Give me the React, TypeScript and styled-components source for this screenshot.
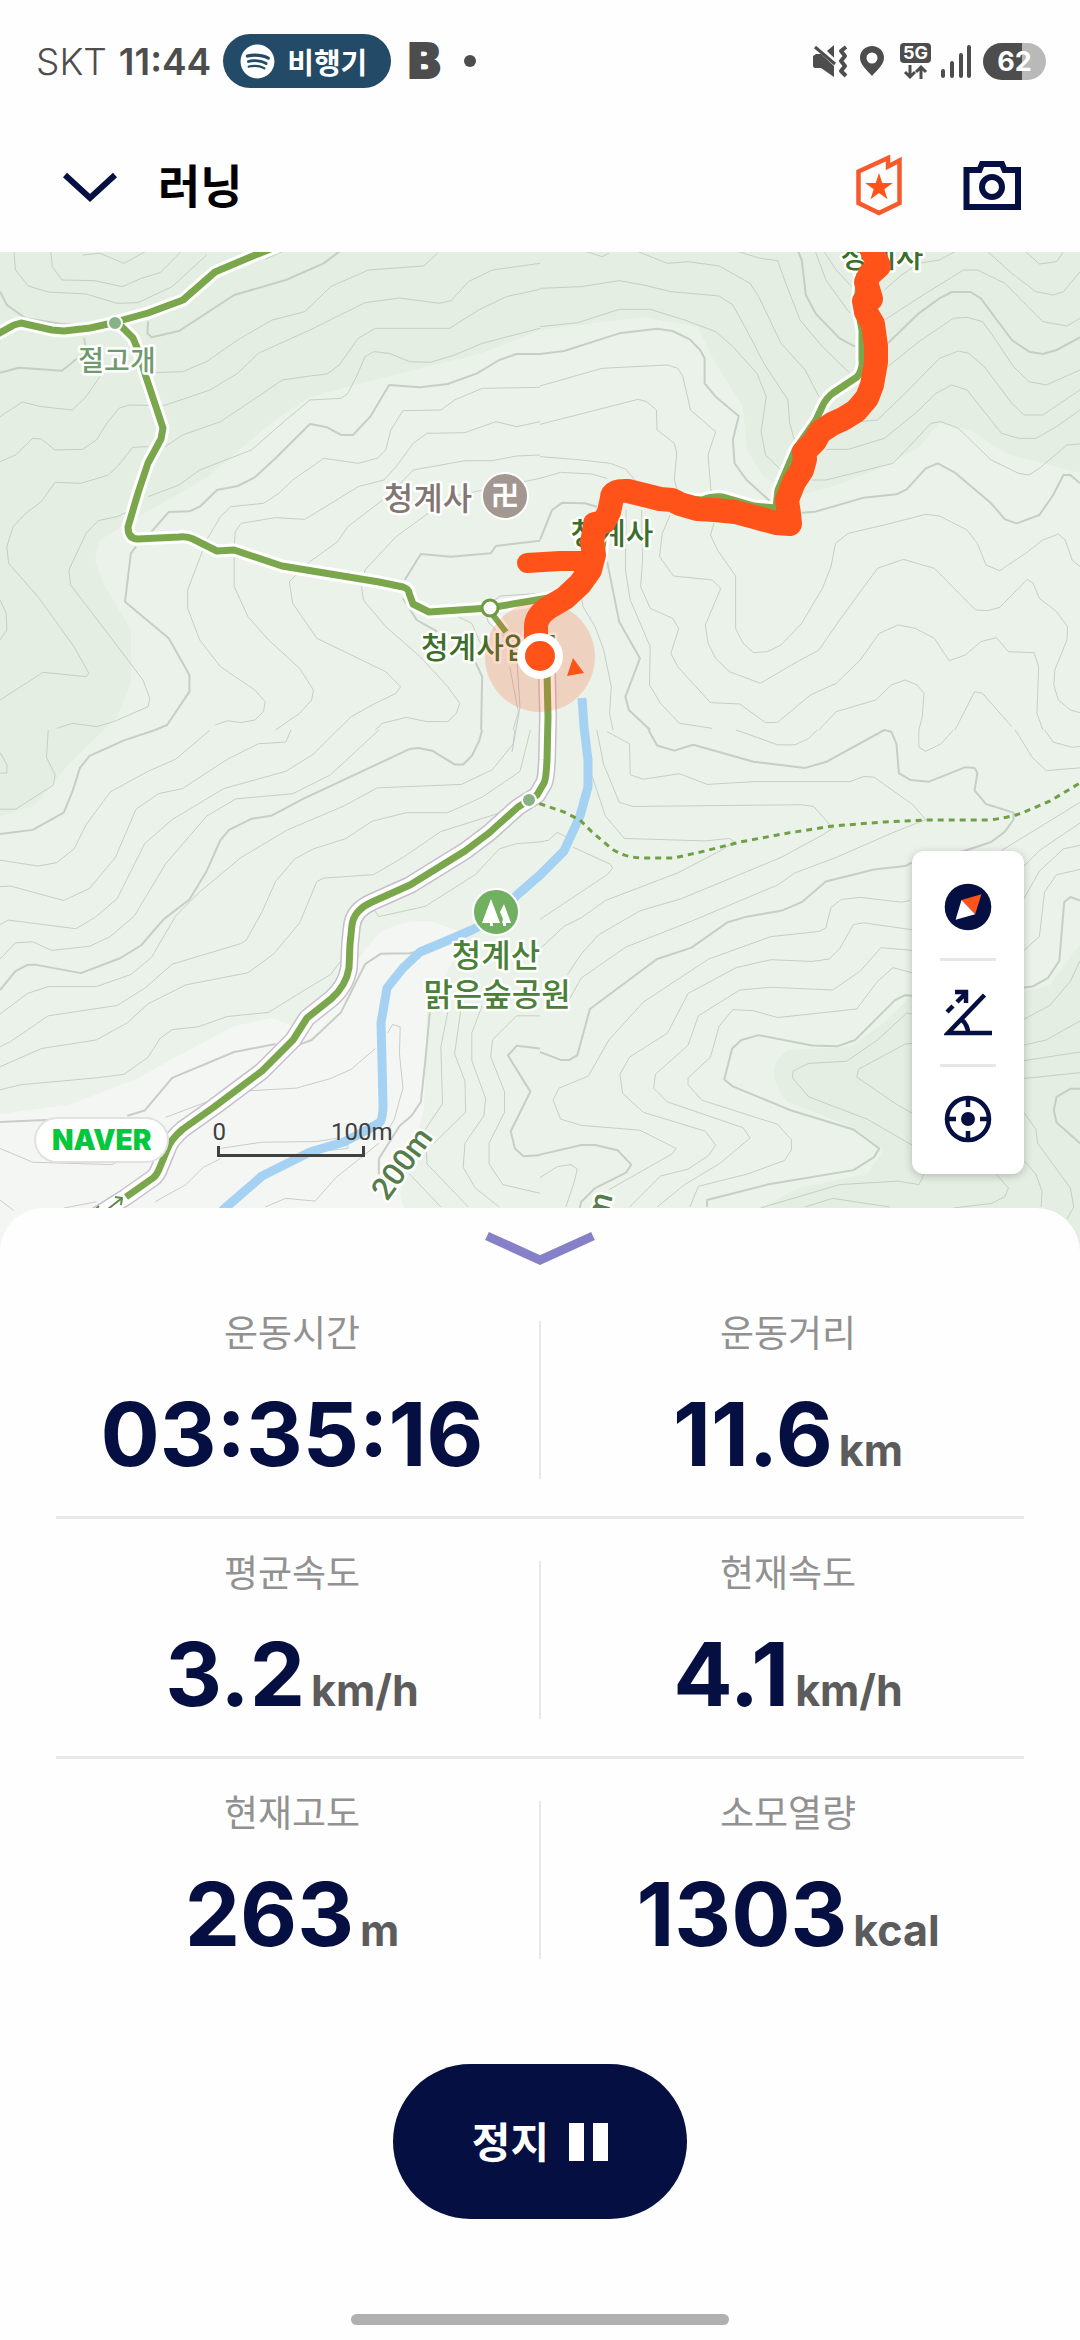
import * as React from "react";
import styled, { createGlobalStyle } from "styled-components";
import { FaSpotify } from "react-icons/fa";

const NAVY = "#050f41";
const ORANGE = "#ff531a";

const GlobalStyle = createGlobalStyle`
  * {
    box-sizing: border-box;
  }
  body {
    margin: 0;
    background: #fefefe;
    font-family: Inter, "Noto Sans CJK KR", sans-serif;
  }
  button {
    border: 0;
    padding: 0;
    background: none;
    font: inherit;
    color: inherit;
    cursor: pointer;
  }
  svg {
    display: block;
  }
`;

const Page = styled.div`
  display: flex;
  flex-direction: column;
  min-height: 100vh;
`;

//Status bar
const StatusBar = styled.div`
  display: flex;
  align-items: center;
  justify-content: space-between;
  height: 122px;
  padding: 0 34px 0 36px;
  color: #4d4d4d;
`;

const StatusGroup = styled.div<{ $gap: number }>`
  display: flex;
  align-items: center;
  gap: ${props => props.$gap}px;
`;

const Carrier = styled.span`
  font-size: 37px;
  font-weight: 300;
`;

const Clock = styled.span`
  font-size: 37px;
  font-weight: 600;
`;

const MusicPill = styled.div`
  display: flex;
  align-items: center;
  gap: 12px;
  height: 54px;
  padding: 0 24px 0 17px;
  border-radius: 27px;
  background: #234a66;
  color: #fff;
  font-family: "Noto Sans CJK KR", sans-serif;
  font-size: 29px;
  font-weight: 700;
  line-height: 54px;
`;

const BrandLetter = styled.span`
  margin-left: 5px;
  font-size: 48px;
  font-weight: 900;
  line-height: 54px;
  -webkit-text-stroke: 2px #4d4d4d;
`;

const NoticeDot = styled.span`
  width: 12px;
  height: 12px;
  margin-left: 12px;
  border-radius: 6px;
  background: #4d4d4d;
`;

const Battery = styled.span`
  width: 63px;
  height: 37px;
  border-radius: 19px;
  background: linear-gradient(90deg, #4d4d4d 62%, #b9b9b9 62%);
  color: #fff;
  font-size: 27px;
  font-weight: 700;
  line-height: 37px;
  text-align: center;
`;

//Header
const Header = styled.header`
  display: flex;
  align-items: center;
  height: 130px;
  padding: 0 58px 0 60px;
`;

const Title = styled.h1`
  flex: 1;
  margin: 0 0 8px 38px;
  color: #000;
  font-family: "Noto Sans CJK KR", sans-serif;
  font-size: 46px;
  font-weight: 700;
  line-height: 64px;
`;

const HeaderActions = styled.div`
  display: flex;
  align-items: center;
  gap: 58px;
  margin-bottom: 4px;
`;

//Map
const MapArea = styled.section`
  position: relative;
  flex: 1 0 800px;
  overflow: hidden;
  background: #eaf2e9;
`;

const MapCanvas = styled.svg`
  position: absolute;
  inset: 0;
  width: 100%;
  height: 100%;
`;

const Contours = styled.g`
  fill: none;
  stroke: #c6cec6;
  stroke-linejoin: round;
  path {
    vector-effect: non-scaling-stroke;
  }
`;

const MapLabel = styled.text<{ $size: number }>`
  fill: ${props => props.color};
  stroke: #fff;
  stroke-width: 5px;
  stroke-linejoin: round;
  paint-order: stroke;
  font-family: Roboto, "Noto Sans CJK KR", sans-serif;
  font-size: ${props => props.$size}px;
  font-weight: 500;
`;

const TempleSign = styled.text`
  fill: #fff;
  font-family: "Noto Sans CJK KR", sans-serif;
  font-size: 28px;
  font-weight: 700;
`;

const MapOverlay = styled.div`
  position: absolute;
  inset: 0 0 48px 0;
  display: flex;
  align-items: flex-end;
  padding: 0 56px 34px 36px;
`;

const NaverMark = styled.div`
  height: 42px;
  margin: 0 45px 13px 0;
  padding: 0 16px;
  border-radius: 21px;
  background: #fff;
  box-shadow: 0 0 0 2px #dfe2df;
  color: #03c73c;
  font-size: 28px;
  font-weight: 900;
  line-height: 42px;
`;

const ScaleBar = styled.div`
  width: 180px;
  margin-bottom: 17px;
  color: #404040;
  font-family: Roboto, sans-serif;
  font-size: 24px;
  line-height: 28px;
`;

const ScaleLabels = styled.div`
  display: flex;
  justify-content: space-between;
`;

const ScaleLine = styled.div`
  width: 148px;
  height: 11px;
  margin: 0 0 0 5px;
  border: 3px solid #404040;
  border-top: 0;
`;

const MapControls = styled.div`
  display: flex;
  flex-direction: column;
  align-items: center;
  width: 112px;
  margin-left: auto;
  padding: 4px 0;
  border-radius: 12px;
  background: #fff;
  box-shadow: 0 2px 8px rgba(0, 0, 0, 0.22);
`;

const ControlButton = styled.button`
  display: flex;
  align-items: center;
  justify-content: center;
  width: 112px;
  height: 103px;
`;

const ControlDivider = styled.div`
  width: 56px;
  height: 3px;
  background: #e6e6e6;
`;

//Workout panel
const Panel = styled.main`
  position: relative;
  display: flex;
  flex-direction: column;
  align-items: center;
  margin-top: -48px;
  padding: 22px 56px 15px;
  border-radius: 44px 44px 0 0;
  background: #fefefe;
`;

const StatsTable = styled.div`
  width: 100%;
  margin-top: 11px;
`;

const StatsRow = styled.div`
  display: grid;
  grid-template-columns: 1fr 2px 1fr;
  column-gap: 11px;
  height: 240px;
  border-bottom: 3px solid #e8e8e8;
  &:last-child {
    border-bottom: 0;
  }
`;

const RowDivider = styled.div`
  height: 158px;
  margin-top: 42px;
  background: #e8e8e8;
`;

const Stat = styled.div`
  display: flex;
  flex-direction: column;
  align-items: center;
  gap: 27px;
  padding-top: 24px;
`;

const StatLabel = styled.div`
  color: #919191;
  font-family: "Noto Sans CJK KR", sans-serif;
  font-size: 37px;
  line-height: 56px;
`;

const StatValue = styled.div`
  display: flex;
  align-items: baseline;
  gap: 6px;
  color: ${NAVY};
  font-size: 88px;
  font-weight: 700;
  line-height: 96px;
`;

const StatUnit = styled.span`
  color: #5c5c5c;
  font-size: 43px;
  font-weight: 700;
`;

const StopButton = styled.button`
  display: flex;
  align-items: center;
  justify-content: center;
  gap: 20px;
  width: 294px;
  height: 155px;
  margin-top: 65px;
  border-radius: 78px;
  background: ${NAVY};
  color: #fff;
  font-family: "Noto Sans CJK KR", sans-serif;
  font-size: 42px;
  font-weight: 700;
`;

const StopText = styled.span`
  padding-bottom: 5px;
`;

const PauseMark = styled.span`
  width: 39px;
  height: 38px;
  border: solid #fff;
  border-width: 0 15px;
`;

const HomeIndicator = styled.div`
  width: 378px;
  height: 11px;
  margin-top: 95px;
  border-radius: 6px;
  background: #b0b0b0;
`;

const stats = [
  [
    { label: "운동시간", value: "03:35:16", unit: "" },
    { label: "운동거리", value: "11.6", unit: "km" }
  ],
  [
    { label: "평균속도", value: "3.2", unit: "km/h" },
    { label: "현재속도", value: "4.1", unit: "km/h" }
  ],
  [
    { label: "현재고도", value: "263", unit: "m" },
    { label: "소모열량", value: "1303", unit: "kcal" }
  ]
];

//Contour lines, one entry per map tile
const tiles = [
  {
    place: "translate(0 -2) scale(.34439 .33333)",
    minor:
      "M40 0L45 60L82 108L140 126L250 132L340 160L400 158L500 110L600 15M147 0L152 50L180 90L275 92L355 110L410 85L465 68L530 0M240 15L290 10L360 40L430 0M770 28L830 0M445 368L530 365L600 335L690 270L790 210L885 185L960 110L1070 60L1230 48L1270 10M0 500L65 456L120 470L210 480L250 440L290 380M0 635L45 615L95 565L120 567L160 600L240 598L280 570L310 520L345 475L375 465L475 467L610 420L690 370L750 310L900 240L1060 158L1160 144L1275 160L1310 152L1360 95L1430 60L1568 40M480 590L530 555L640 515L720 460L820 390L900 378L950 372L985 345L1040 265L1090 235L1305 235L1390 180L1470 140L1568 118M0 1350L125 1267L250 1280L258 1270L215 1190L110 1040L25 940L20 890L38 830L75 790L120 755L160 697L235 700L315 675L345 645L385 592L430 590M430 740L520 705L580 660L730 600L830 510L900 450L990 445L1010 430L1035 380L1060 320L1085 305L1130 310L1190 335L1250 337L1320 315L1400 280L1568 235M165 1435L210 1420L280 1430L330 1415L430 1370L435 1345L415 1290L320 1160L205 1005L200 960L250 850L285 812L340 800L370 785M625 1425L660 1412L700 1418L740 1410L765 1385L770 1355L740 1320L640 1250L580 1170L545 1075L545 1020L600 870L640 800L670 770L765 760L810 730L850 690L940 625L1040 640L1095 625L1120 600L1135 540L1170 482L1280 480L1320 450L1400 415L1568 412M800 1440L870 1390L905 1350L910 1320L870 1255L780 1170L720 1100L680 1010L680 890L683 845L700 820L800 803L885 808L930 780L1040 710L1115 690L1150 650L1200 580L1240 550L1350 548L1440 515L1500 530L1568 515M980 1440L1020 1400L1080 1365L1150 1330L1163 1310L1120 1265L1010 1210L920 1165L850 1060L840 995L900 935L980 875L1010 830L1130 735L1200 660L1350 632L1430 632L1500 618L1568 615M1090 1440L1110 1420L1180 1402L1240 1415L1300 1415L1325 1390L1335 1360L1300 1310L1220 1220L1120 1130L1055 1050L1050 1010L1060 960L1150 860L1310 740L1568 685M0 1170L20 1140L18 1090L0 1050M1330 1100L1370 1120L1395 1180M1480 1250L1505 1385L1490 1440",
    major:
      "M0 125L20 165L75 205L180 222L230 225M430 215L428 250L440 262L520 243L680 135L830 90L940 40L985 5M0 368L55 353L180 362L230 320M440 845L490 786L550 784L580 770L630 720L690 708L740 682L800 625L900 522L950 532L990 555L1025 555L1075 500L1130 405L1220 412L1300 402L1385 370L1450 330L1500 312L1568 312M395 890L380 910L363 1055L490 1165L550 1275L550 1325L485 1425L450 1440M1175 990L1222 912L1310 920L1425 910L1440 888L1568 872M1170 1045L1210 1110L1270 1145M1380 1235L1400 1280L1397 1440"
  },
  {
    place: "translate(540 -2) scale(.34439 .33333)",
    minor:
      "M285 5L370 40L430 35L520 48L610 100L635 140L700 280L770 360L810 440M120 0L180 20L200 10M0 115L120 110L230 92L300 105L380 125L520 138L560 165L600 240L650 340L720 450L725 520L740 575M0 230L110 218L230 178L320 178L420 210L510 245L560 290L630 370L657 440L642 545L655 615L710 670M0 408L180 355L370 345L400 355L415 380L437 480L510 545L488 615L497 730M0 523L285 448L310 455L338 480L340 540L390 580L397 610L390 690L400 725M0 620L100 628L205 640L250 658L275 690M0 685L60 667L150 672L195 685M575 5L640 25L690 32L710 90L755 210L820 290L900 370M800 5L830 90L900 190M825 5L860 60L905 110M1000 120L1050 75L1100 40L1160 30L1205 5M1000 210L1120 130L1230 60L1270 60L1350 100L1460 215L1530 228L1568 205M1010 350L1100 275L1200 205L1240 202L1285 215L1310 250L1375 350L1420 395L1470 405L1568 360M930 515L980 510L1060 430L1160 325L1215 303L1245 310L1290 350L1370 460L1405 495L1460 495L1568 420M830 598L895 598L1000 565L1090 490L1150 430L1195 405L1240 420L1340 550L1390 565L1440 565L1500 530L1568 480M790 690L830 690L1025 640L1090 570L1135 520L1165 515L1215 535L1310 630L1390 670L1420 675L1450 655L1530 585L1568 582M1300 5L1370 70L1440 125L1490 135L1520 125L1568 65M1410 5L1450 42L1500 35L1520 5M505 820L495 855L515 900L568 978L568 1135L590 1180L620 1208L660 1205L700 1185L760 1120L820 1015L845 950L858 880L895 850L1000 825L1120 793L1160 798L1240 840L1270 880L1295 945L1335 962L1410 910L1460 870L1505 852L1525 870L1545 930L1568 950M378 795L355 850L347 920L388 978L500 990L525 1015L480 1125L488 1180L510 1225L550 1265L640 1300L730 1245L810 1200L870 1110L980 955L1055 928L1145 955L1265 1080L1300 1082L1335 1072L1415 988L1432 1000L1450 1045L1500 1085L1532 1130L1530 1170L1495 1260L1492 1305L1505 1350L1540 1380L1568 1388M295 780L298 930L292 1010L320 1075L385 1105L403 1135L380 1210L400 1250L495 1358L580 1362L655 1418L690 1417L785 1335L860 1300L930 1230L985 1150L1040 1125L1090 1135L1145 1165L1188 1232L1235 1215L1280 1175L1325 1163L1360 1205L1435 1208L1448 1250L1443 1390L1460 1440M250 780L248 960L262 1050L320 1190L318 1305L350 1360L405 1420L500 1435M120 1040L125 1070L160 1130L185 1200L207 1310L202 1390L212 1440M810 1440L860 1385L975 1350L1020 1305L1060 1290L1095 1305L1115 1330L1110 1400L1100 1440M1205 1440L1262 1325L1285 1330L1370 1430",
    major:
      "M0 312L70 303L230 250L340 236L385 243L435 268L465 300L478 325L478 400L510 440L577 498L560 570L565 640L600 690L680 765M750 5L760 30L772 135L800 190L870 265L915 290M1010 280L1100 190L1160 145L1195 126L1250 126L1280 145L1370 270L1420 305L1460 312L1500 300L1568 262M760 788L800 785L940 743L1035 733L1065 718L1120 655L1155 640L1205 668L1310 760L1350 808L1385 820L1450 795L1490 735L1520 675L1540 675L1568 700M0 870L35 780L65 758L130 760L165 770M195 935L230 1115L290 1225L248 1340L258 1380L320 1440"
  },
  {
    place: "translate(0 478) scale(.34439)",
    minor:
      "M0 378L110 395L165 385L215 345L250 275L320 180L430 120L510 85L610 0M0 455L30 453L185 495L260 460L335 370L395 230L460 185L530 170L660 85L750 40L830 35L845 0M0 565L25 552L220 577L275 545L340 490L420 330L500 260L650 170L830 120L910 70L980 0M0 665L45 618L95 615L150 640L260 628L320 600L390 540L480 390L600 250L685 200L850 185L960 130L1100 0M0 825L80 765L140 745L280 745L380 710L440 660L510 540L580 470L700 370L835 290L1000 220L1095 168L1340 158L1430 115L1490 40L1495 0M0 920L30 905L140 830L340 800L420 750L500 680L700 620L715 610L760 530L800 440L855 375L910 345L1005 315L1080 265L1180 240L1300 240L1400 195L1510 120L1540 0M0 978L120 925L280 900L370 850L430 795L540 740L720 705L795 650L870 560L920 440L940 430L1085 420L1170 370L1280 295L1470 235M0 1045L60 1030L280 1010L360 1000L430 950L465 895L500 870L575 862L660 832L780 820L860 770L960 710L990 670M1085 520L1100 542L1235 512L1380 420L1450 345L1500 330L1568 325M0 65L20 100L20 125L0 125M140 0L135 80L160 130L155 160L45 230L0 230M0 1215L95 1255L325 1262L345 1252M715 1048L860 1040L960 1012L1020 985L1090 925M1125 880L1140 855L1162 862L1160 940L1170 1040L1145 1130L1125 1165M480 1125L600 1080M640 1215L760 1197L920 1195L980 1185M1010 1195L1010 1215L870 1230M770 1385L830 1360L915 1368L975 1300L1100 1200M1190 1290L1280 1385M1300 820L1280 920L1285 1085L1235 1160L1240 1260L1360 1385M1340 800L1320 940L1350 1020L1352 1110L1280 1180L1260 1200M1400 800L1370 880L1370 960L1410 1070L1405 1120L1350 1200L1345 1270L1380 1330L1450 1385M1568 830L1500 830L1430 900L1425 950L1465 1050L1465 1110L1420 1200L1420 1260L1460 1320L1568 1345M450 1370L540 1320L590 1270L640 1245M0 1365L40 1395M185 1388L280 1370",
    major:
      "M0 302L95 290L185 240L210 180L232 110L260 75L360 30L450 0M0 755L45 700L80 682L105 682L235 706L350 662L410 625L475 550L550 492L600 410L640 320L665 290L730 258L790 248L880 200L1190 55L1215 52L1255 60L1320 100L1345 100L1370 75L1392 30L1400 0M0 1138L180 1130M370 1120L420 1105L500 1010L680 935L800 912M865 915L905 900L990 820L1060 680L1105 650L1190 648L1235 638M1248 820L1235 960L1222 1080L1195 1120L1160 1150L1100 1245L1100 1290M1568 925L1500 917L1475 945L1540 1050L1483 1165L1495 1215L1520 1238L1568 1235"
  },
  {
    place: "translate(540 478) scale(.34439)",
    minor:
      "M195 5L260 40L262 130L300 143L405 127L485 158L620 150L900 150L940 135L970 137L1080 215L1120 260L1020 300L860 370L740 415L690 450L440 555L250 630L120 720L75 800M165 0L185 100L230 210L270 222L760 217L795 222L850 285L820 305L700 370L410 490L290 525L170 595L120 650L80 710M150 130L190 250L245 315L480 322L550 315L565 325L525 350L400 415L190 495L120 545L70 570L0 635M95 340L205 390L210 402L195 420L0 550M0 325L25 320L50 297L95 320M1075 495L1050 500L930 486L875 492L845 515L830 575L810 585L670 600L490 665L300 790L200 900L140 1005L55 1040L38 1075L60 1130L120 1148L290 1162L395 1215L385 1230L200 1335M1080 580L940 560L910 565L870 635L840 665L790 672L670 667L570 690L430 765L370 880L260 950L232 1000L240 1055L300 1110L480 1165L510 1205L490 1235L430 1275L350 1295L260 1385M1080 640L990 632L930 700L850 755L670 747L580 755L460 830L430 915L335 1000L330 1040L370 1080L590 1155L610 1185L520 1260L420 1320L340 1385M1080 705L1025 690L980 730L920 810L690 835L620 815L560 812L520 860L495 950L430 1010L430 1030L470 1075L690 1145L730 1190L730 1220L710 1250L600 1290L460 1325L435 1385M1080 825L1065 822L980 900L890 962L780 968L735 990L733 1010L780 1065L950 1130L1080 1205M1080 910L1060 912L925 985L920 1008L1040 1090L1080 1112M640 1388L870 1320L1040 1310L1100 1320L1115 1290M770 1385L850 1360L1015 1385M1405 915L1470 900L1568 845M1405 840L1480 800L1540 730L1568 670M1405 960L1568 935M1405 1012L1568 995M1340 350L1568 210M1400 400L1450 350L1568 270M1405 490L1450 410L1520 345L1568 335M1405 640L1450 600L1465 470L1500 420L1568 405M1405 1110L1440 1160L1445 1200L1540 1330L1550 1385L1530 1420M1405 1250L1440 1290L1458 1340L1455 1385M1325 1290L1360 1330L1350 1355L1310 1375L1200 1388M1380 0L1430 80L1470 118L1568 110M1465 0L1490 35L1545 50L1568 48M1100 0L1100 50L1120 62L1165 40L1200 0M570 0L690 43L740 43L780 25L805 0M0 1300L50 1268L90 1262L108 1275L100 1310L75 1385",
    major:
      "M315 0L340 45L390 60L445 43L620 92L770 110L830 93L1000 0L1020 5L1035 40L1042 125L1075 145L1130 150L1235 108L1262 110L1270 125L1262 175L1295 215L1375 240L1375 260L1350 295L1310 325L1220 355M1080 385L1060 395L970 405L830 440L760 500L700 525L600 542L545 558L440 632L340 665L145 810L108 945L85 958L60 958L0 935M1080 772L1060 770L1030 785L915 900L865 918L790 916L635 886L585 900L558 925L535 1015L560 1035L730 1105L910 1160L985 1215L970 1240L910 1278L660 1320L485 1365L485 1385M0 1233L120 1205L160 1205L225 1220L265 1262L250 1285L160 1330L120 1370L115 1388M1405 748L1430 745L1475 720L1508 670L1522 500L1540 485L1568 495M1568 1042L1540 1042L1500 1065L1492 1105L1500 1140L1568 1200"
  }
];

const trails =
  "M278 -6L248 6L215 20L183 48L148 61L108 72L90 76L64 79L52 78L21 71L14 73L-6 84M115 71L122 75L133 86L138 98L146 125L163 176L161 187L148 211L138 241L128 275Q128 287 138 287L179 285Q187 284 193 287L217 299L234 298L282 314L379 330L403 335Q409 337 409 341L413 352L429 360L489 356L560 344L600 310L610 240L650 244L702 248Q712 244 723 245L754 254L776 256L778 238L795 198L816 168L822 155Q826 146 833 141L857 125Q863 118 862 108L862 78L857 51L860 20";
const road =
  "M547 420L548 465L547 508Q546 528 544 531L537 543L518 555L489 581L465 599L410 633L372 650Q354 658 352 673L350 692L349 716Q346 734 331 747L307 766L293 788L262 819L214 855L183 877Q170 888 167 898L160 915Q157 923 153 926L126 945";
const roadTail = "L80 974";
const river =
  "M582 446L584 475L588 508L588 535L580 564L564 599L540 623L517 643L496 666L472 678L444 690L420 700L403 716L387 736L381 771L382 809L383 853Q383 868 379 871L365 879L344 890L310 900L262 924L224 957L190 990";
const track =
  "M869 -8L879 14L870 22L866 30L871 47L864 49L866 60L873 72L876 94L876 110L872 133L867 146L856 159L843 167L832 172L820 180L815 189L804 200L805 207L802 218L794 230L787 248L789 262L790 272L776 271L754 265L735 260L715 258L697 257L680 252L672 248L660 247L640 242L628 239Q612 238 612 246L609 260L604 270L595 272L594 280L592 290L594 303L590 318L580 332L565 346L548 356Q536 364 536 375L536 390";

const TrailMap = () => (
  <MapCanvas
    viewBox="0 0 1080 1004"
    preserveAspectRatio="xMidYMin slice"
    role="img"
    aria-label="청계사 주변 지도"
  >
    <path
      fill="#e4eee3"
      d="M0 -2H1080V221L1005 201L970 178L939 171L919 195L891 211L843 231L795 245L764 225L747 198L743 155L712 105L698 75L643 65L540 78L482 101L362 131L310 145L275 168L207 225L138 265L100 288L95 308L103 331L131 378L131 431L117 465L69 512L34 554L0 564ZM1080 692L1050 733L1022 740L912 743L884 771L850 795L788 798Q760 818 788 850L850 874L884 898L867 922L798 936L760 957L700 1004H1080Z"
    />
    <path
      fill="#f4f6f4"
      d="M0 862L69 853L138 826L189 798L234 774L272 766L293 774L330 740L362 702L379 681Q400 668 430 669L465 681L448 719L427 760L424 857L400 943L420 1004H0Z"
    />
    {tiles.map(tile => (
      <Contours key={tile.place} transform={tile.place}>
        <path d={tile.minor} strokeWidth={1} />
        <path d={tile.major} strokeWidth={2} />
      </Contours>
    ))}
    <path d="M84 86L86 96L80 106" fill="none" stroke="#cfd3bd" strokeWidth={2} />
    <g fill="none" strokeLinejoin="round">
      <path d={river} stroke="#a5d2f2" strokeWidth={9} />
      <path
        d="M489 353L500 344L560 340M487 362L488 370L508 388L517 410L520 455L512 500M530 380L540 410L540 440"
        stroke="#c9c6ce"
      />
      <path d={road + roadTail} stroke="#c5bfcc" strokeWidth={18} />
      <path d={road + roadTail} stroke="#fff" strokeWidth={15} />
      <path d={trails} stroke="#fff" strokeWidth={13} />
      <path d="M489 358L504 378" stroke="#fff" strokeWidth={12} />
      <path d={road} stroke="#7aa74b" strokeWidth={7} />
      <path d={trails} stroke="#7aa74b" strokeWidth={7} />
      <path d="M489 358L506 380" stroke="#7aa74b" strokeWidth={6} />
      <path
        d="M529 548L564 560L580 568L592 580L612 597Q625 606 645 606L674 606L705 599L740 590L788 581L833 574L884 570L926 568L988 568Q1008 566 1022 561L1050 549L1080 531"
        stroke="#6fa046"
        strokeWidth={3}
        strokeDasharray="6 5"
      />
      <path d="M108 957L122 946M115 945L122 946L121 953M95 958L99 954" stroke="#5b8a4c" strokeWidth={2} />
    </g>
    <g fill="#86b286" stroke="#fff" strokeWidth={2}>
      <circle cx={115} cy={71} r={7} />
      <circle cx={529} cy={548} r={7} />
    </g>
    <circle cx={490} cy={356} r={8} fill="#fff" stroke="#6f9a44" strokeWidth={3} />

    <MapLabel $size={28} color="#6f9a70" x={117} y={119} textAnchor="middle">
      절고개
    </MapLabel>
    <MapLabel $size={32} color="#83756f" x={428} y={258} textAnchor="middle">
      청계사
    </MapLabel>
    <MapLabel $size={30} color="#3b6e2a" x={882} y={15} textAnchor="middle">
      청계사
    </MapLabel>
    <MapLabel $size={30} color="#3b6e2a" x={612} y={292} textAnchor="middle">
      청계사
    </MapLabel>
    <MapLabel $size={30} color="#3b6e2a" x={421} y={406}>
      청계사입구
    </MapLabel>
    <MapLabel $size={32} color="#4b8038" x={496} y={715} textAnchor="middle">
      청계산
    </MapLabel>
    <MapLabel $size={32} color="#4b8038" x={497} y={754} textAnchor="middle">
      맑은숲공원
    </MapLabel>
    <MapLabel $size={31} color="#557d4a" transform="translate(387 950) rotate(-54)">
      200m
    </MapLabel>
    <MapLabel $size={31} color="#557d4a" transform="translate(613 944) rotate(-75)" textAnchor="end">
      m
    </MapLabel>

    <circle cx={505} cy={244} r={23} fill="#a39791" stroke="#fff" strokeWidth={2} />
    <TempleSign x={505} y={254} textAnchor="middle">
      卍
    </TempleSign>
    <circle cx={496} cy={660} r={23} fill="#70b060" stroke="#fff" strokeWidth={2} />
    <path
      fill="#fff"
      d="M491 647L500 671H493V674H490V671H482ZM504 652L511 671H506V674H503V671H502L503 667L500 660Z"
    />

    <circle cx={540} cy={405} r={55} fill={ORANGE} opacity={0.2} />
    <g fill="none" stroke={ORANGE} strokeLinecap="round" strokeLinejoin="round">
      <path d="M592 309L560 309L527 311" strokeWidth={20} />
      <path d={track} strokeWidth={24} />
    </g>
    <circle cx={540} cy={404} r={19} fill={ORANGE} stroke="#fff" strokeWidth={8} />
    <path d="M573 406L584 421L567 424Z" fill={ORANGE} />
  </MapCanvas>
);

const SoundOffIcon = () => (
  <svg width="40" height="36" viewBox="0 0 40 36" fill="#4d4d4d">
    <path d="M3 13L6 11H11L24 23V34L11 25H5Q3 25 3 22ZM17 8L24 2V15Z" />
    <path d="M5 4L25 21" stroke="#4d4d4d" strokeWidth="3" />
    <path d="M9 3L26 18" stroke="#fefefe" strokeWidth="2" />
    <path
      d="M36 4L31 8L35 13L31 18L35 23L31 28L36 33"
      fill="none"
      stroke="#4d4d4d"
      strokeWidth="4"
      strokeLinejoin="round"
    />
  </svg>
);

const PinIcon = () => (
  <svg width="24" height="32" viewBox="0 0 24 32">
    <path
      fill="#4d4d4d"
      fillRule="evenodd"
      d="M12 1C5.500 1 0 6 0 12.500C0 20 7 25 12 31C17 25 24 20 24 12.500C24 6 18.500 1 12 1ZM12 7.500A5.500 5.500 0 1 1 12 18.500A5.500 5.500 0 1 1 12 7.500Z"
    />
  </svg>
);

const NetworkBlock = styled.div`
  margin: 0 -2px 0 6px;
`;

const NetworkLabel = styled.span`
  display: block;
  width: 31px;
  height: 20px;
  border-radius: 4px;
  background: #4d4d4d;
  color: #fff;
  font-size: 18px;
  font-weight: 700;
  line-height: 20px;
  text-align: center;
`;

const NetworkIcon = () => (
  <NetworkBlock>
    <NetworkLabel>5G</NetworkLabel>
    <svg width="31" height="17" viewBox="0 0 31 17" fill="none" stroke="#4d4d4d" strokeWidth="3">
      <path d="M10 2V14M5 9L10 14L15 9M21 16V4M16 9L21 4L26 9" />
    </svg>
  </NetworkBlock>
);

const SignalIcon = () => (
  <svg width="34" height="36" viewBox="0 0 34 36" stroke="#4d4d4d" strokeWidth="4" strokeLinecap="round">
    <path d="M4 28V33M13 20V33M22 12V33M30 4V33" />
  </svg>
);

const BadgeIcon = () => (
  <svg width="50" height="66" viewBox="0 0 50 66">
    <path
      d="M4.500 19.500L34 6V14.500L45.500 8.500V51L25 61L4.500 51Z"
      fill="none"
      stroke="#f7592a"
      strokeWidth="4.500"
    />
    <path
      d="M25 21L28.300 31H38.800L30.300 37.200L33.500 47.200L25 41.100L16.500 47.200L19.700 37.200L11.200 31H21.700Z"
      fill={ORANGE}
    />
  </svg>
);

const CameraIcon = () => (
  <svg width="60" height="52" viewBox="0 0 60 52" fill="none" stroke={NAVY} strokeWidth="6">
    <path d="M4.500 11H17.500L20 5H40L42.500 11H56V48H4.500Z" />
    <circle cx="30" cy="28" r="10" />
  </svg>
);

const CompassIcon = () => (
  <svg width="48" height="48" viewBox="-24 -24 48 48">
    <circle r="23.300" fill={NAVY} />
    <path d="M-6.500 -7L13.400 -12.700L7.200 7.200Z" fill={ORANGE} />
    <path d="M-6.500 -7L7.200 7.200L-12.400 12.700Z" fill="#fff" />
  </svg>
);

const SlopeIcon = () => (
  <svg width="48" height="48" viewBox="-24 -24 48 48" fill="none" stroke={NAVY} strokeWidth="4.500">
    <path d="M24 20H-20L16.500 -18" />
    <path d="M-7 6Q0 12 0 20M-21 -1L-15 -7M-11 -11L-2 -20M-13 -21H-2V-10" />
  </svg>
);

const LocateIcon = () => (
  <svg width="48" height="48" viewBox="-24 -24 48 48" fill="none" stroke={NAVY} strokeWidth="4.500">
    <circle r="21" />
    <circle r="7" fill={NAVY} stroke="none" />
    <path d="M0 -21V-12M0 21V12M-21 0H-12M21 0H12" />
  </svg>
);

class App extends React.Component<any, any> {
  render(): React.ReactNode {
    return (
      <Page>
        <GlobalStyle />
        <StatusBar>
          <StatusGroup $gap={12}>
            <Carrier>SKT</Carrier>
            <Clock>11:44</Clock>
            <MusicPill>
              <FaSpotify size={35} />
              비행기
            </MusicPill>
            <BrandLetter>B</BrandLetter>
            <NoticeDot />
          </StatusGroup>
          <StatusGroup $gap={10}>
            <SoundOffIcon />
            <PinIcon />
            <NetworkIcon />
            <SignalIcon />
            <Battery>62</Battery>
          </StatusGroup>
        </StatusBar>

        <Header>
          <button aria-label="닫기">
            <svg width="60" height="40" viewBox="0 0 60 40">
              <path d="M5 8L30 31L55 8" fill="none" stroke={NAVY} strokeWidth="6" />
            </svg>
          </button>
          <Title>러닝</Title>
          <HeaderActions>
            <button aria-label="배지">
              <BadgeIcon />
            </button>
            <button aria-label="카메라">
              <CameraIcon />
            </button>
          </HeaderActions>
        </Header>

        <MapArea>
          <TrailMap />
          <MapOverlay>
            <NaverMark>NAVER</NaverMark>
            <ScaleBar>
              <ScaleLabels>
                <span>0</span>
                <span>100m</span>
              </ScaleLabels>
              <ScaleLine />
            </ScaleBar>
            <MapControls>
              <ControlButton aria-label="나침반">
                <CompassIcon />
              </ControlButton>
              <ControlDivider />
              <ControlButton aria-label="경사">
                <SlopeIcon />
              </ControlButton>
              <ControlDivider />
              <ControlButton aria-label="현재 위치">
                <LocateIcon />
              </ControlButton>
            </MapControls>
          </MapOverlay>
        </MapArea>

        <Panel>
          <button aria-label="패널 접기">
            <svg width="112" height="38" viewBox="0 0 112 38">
              <path d="M3 6L56 30L109 6" fill="none" stroke="#8680c8" strokeWidth="9" />
            </svg>
          </button>
          <StatsTable>
            {stats.map(([left, right]) => (
              <StatsRow key={left.label}>
                <Stat>
                  <StatLabel>{left.label}</StatLabel>
                  <StatValue>
                    {left.value}
                    {left.unit && <StatUnit>{left.unit}</StatUnit>}
                  </StatValue>
                </Stat>
                <RowDivider />
                <Stat>
                  <StatLabel>{right.label}</StatLabel>
                  <StatValue>
                    {right.value}
                    <StatUnit>{right.unit}</StatUnit>
                  </StatValue>
                </Stat>
              </StatsRow>
            ))}
          </StatsTable>
          <StopButton>
            <StopText>정지</StopText>
            <PauseMark />
          </StopButton>
          <HomeIndicator />
        </Panel>
      </Page>
    );
  }
}

export default App;
